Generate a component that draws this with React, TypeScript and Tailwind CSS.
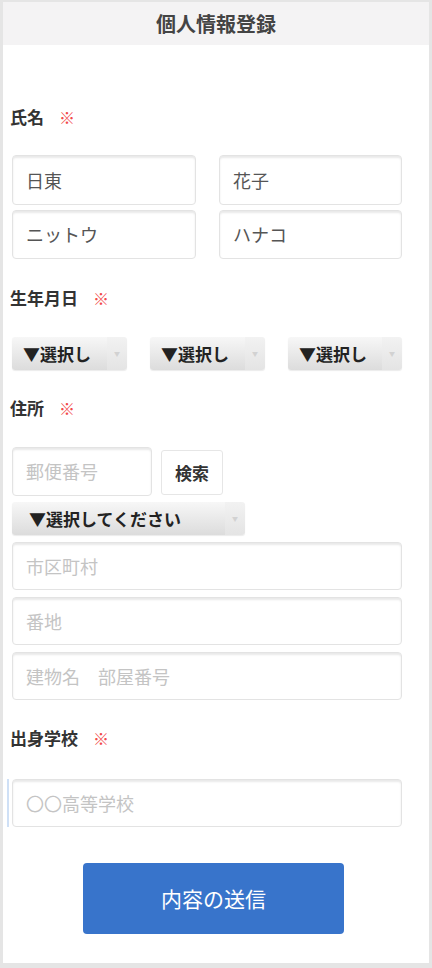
import React from "react";

const font = { fontFamily: '"Noto Sans CJK JP", "Noto Sans", sans-serif' };

function Label({ text }: { text: string }) {
  return (
    <div className="flex items-center h-5 pl-[7px] text-[17px] font-bold text-[#333]">
      <span>{text}</span>
      <span className="ml-[15px] text-[#f24a4a] font-normal text-[16px]">※</span>
    </div>
  );
}

function TextBox({
  value,
  placeholder,
  className = "",
}: {
  value?: string;
  placeholder?: string;
  className?: string;
}) {
  return (
    <div
      className={`flex items-center bg-white border border-[#e3e3e3] rounded-[4px] shadow-[inset_0_2px_2px_rgba(0,0,0,0.09)] pl-[13px] text-[18px] ${
        value ? "text-[#555]" : "text-[#c4c4c4]"
      } ${className}`}
    >
      {value || placeholder}
    </div>
  );
}

function Select({ label, className = "" }: { label: string; className?: string }) {
  return (
    <div
      className={`flex h-[33px] rounded-[3px] overflow-hidden shadow-[0_1px_1px_rgba(0,0,0,0.08)] ${className}`}
    >
      <div className="flex-1 flex items-center pl-[11px] bg-gradient-to-b from-[#f7f7f7] to-[#dcdcdc] text-[17px] font-bold text-[#222] whitespace-nowrap overflow-hidden">
        {label}
      </div>
      <div className="w-[20px] flex items-center justify-center bg-gradient-to-b from-[#f2f2f2] to-[#e4e4e4] text-[6px] text-[#d2d2d2]">
        ▼
      </div>
    </div>
  );
}

export default function App() {
  return (
    <div className="min-h-[968px] bg-[#e5e5e5] pt-[2px] px-[3px] pb-[5px]" style={font}>
      <div className="bg-white h-[961px] flex flex-col">
        {/* ヘッダー */}
        <header className="h-[43px] bg-[#f4f3f4] flex items-center justify-center text-[20px] font-bold text-[#444]">
          個人情報登録
        </header>

        {/* 氏名 */}
        <div className="mt-[62px]">
          <Label text="氏名" />
        </div>
        <div className="mt-[28px] pl-[9px] flex flex-col gap-[5px]">
          <div className="flex gap-[23px]">
            <TextBox value="日東" className="w-[184px] h-[50px]" />
            <TextBox value="花子" className="w-[183px] h-[50px]" />
          </div>
          <div className="flex gap-[23px]">
            <TextBox value="ニットウ" className="w-[184px] h-[49px]" />
            <TextBox value="ハナコ" className="w-[183px] h-[49px]" />
          </div>
        </div>

        {/* 生年月日 */}
        <div className="mt-[29px]">
          <Label text="生年月日" />
        </div>
        <div className="mt-[29px] pl-[9px] flex gap-[23px]">
          <Select label="▼選択し" className="w-[115px]" />
          <Select label="▼選択し" className="w-[115px]" />
          <Select label="▼選択し" className="w-[114px]" />
        </div>

        {/* 住所 */}
        <div className="mt-[28px]">
          <Label text="住所" />
        </div>
        <div className="mt-[29px] pl-[9px] flex items-start gap-[9px]">
          <TextBox placeholder="郵便番号" className="w-[140px] h-[49px]" />
          <button className="mt-[3px] w-[62px] h-[45px] bg-white border border-[#e6e6e6] rounded-[3px] text-[17px] font-bold text-[#333]">
            検索
          </button>
        </div>
        <div className="mt-[6px] pl-[9px]">
          <Select label="▼選択してください" className="w-[233px] [&>div:first-child]:pl-[17px]" />
        </div>
        <div className="mt-[7px] pl-[9px] flex flex-col gap-[7px]">
          <TextBox placeholder="市区町村" className="w-[390px] h-[48px]" />
          <TextBox placeholder="番地" className="w-[390px] h-[48px]" />
          <TextBox placeholder="建物名　部屋番号" className="w-[390px] h-[48px]" />
        </div>

        {/* 出身学校 */}
        <div className="mt-[28px]">
          <Label text="出身学校" />
        </div>
        <div className="mt-[31px] pl-[4px] flex items-stretch gap-[3px]">
          <div className="w-[2px] bg-[#cfe0f6]" />
          <TextBox placeholder="〇〇高等学校" className="w-[390px] h-[48px]" />
        </div>

        {/* 送信ボタン */}
        <div className="mt-[36px] pl-[80px]">
          <button className="w-[261px] h-[71px] bg-[#3874cb] rounded-[4px] text-white text-[21px]">
            内容の送信
          </button>
        </div>
      </div>
    </div>
  );
}
